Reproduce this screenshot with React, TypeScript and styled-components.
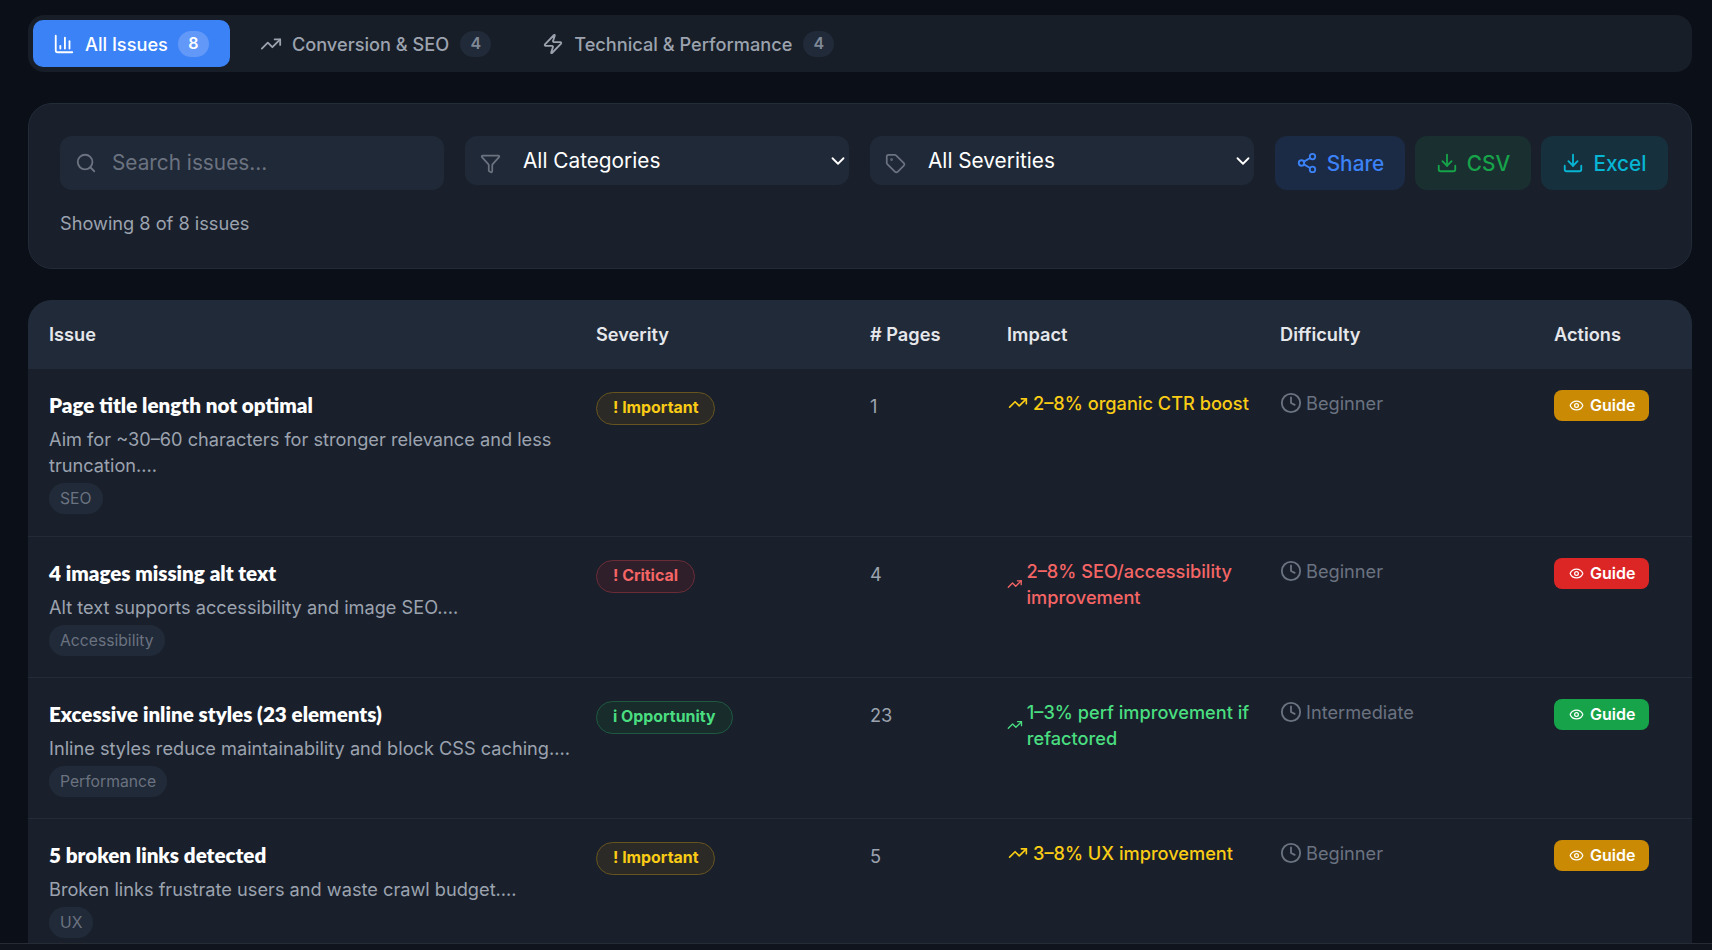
import React from "react";
import styled, { createGlobalStyle, css } from "styled-components";
import { ChartColumn, TrendingUp, Zap, Search, Filter, Tag, Share2, Download, Clock, Eye, ChevronDown } from "lucide-react";

const Global = createGlobalStyle`
  html, body { margin: 0; height: 100%; overflow: hidden; background: #0b0f17; }
  body { font-family: Inter, "Liberation Sans", sans-serif; color: #fff; }
  * { box-sizing: border-box; }
`;

const Page = styled.main`
  height: 950px;
  overflow: hidden;
  padding: 15px 20px 0 28px;
  display: flex;
  flex-direction: column;
  gap: 31px;
`;

const TabBar = styled.nav`
  display: flex;
  gap: 10px;
  height: 57px;
  padding: 5px;
  background: #171e28;
  border-radius: 16px;
`;

const TabButton = styled.div<{ $active?: boolean }>`
  display: flex;
  align-items: center;
  gap: 10px;
  height: 47px;
  padding: 0 21px 0 20px;
  border-radius: 10px;
  font-size: 18.2px;
  font-weight: 500;
  background: ${(p) => (p.$active ? "#3b82f6" : "transparent")};
  color: ${(p) => (p.$active ? "#fff" : "#9ca3af")};
  svg { width: 22px; height: 22px; flex: none; }
`;

const TabCount = styled.span<{ $active?: boolean }>`
  display: inline-flex;
  align-items: center;
  justify-content: center;
  width: 31px;
  height: 26px;
  margin-left: ${(p) => (p.$active ? "0" : "1px")};
  padding-bottom: 2px;
  border-radius: 13px;
  font-size: 16px;
  font-weight: 600;
  background: ${(p) => (p.$active ? "#6298f8" : "#212a38")};
  color: ${(p) => (p.$active ? "#fff" : "#7f8896")};
`;

const FilterCard = styled.section`
  height: 166px;
  padding: 32px 22px 0 31px;
  background: #19202c;
  border: 1px solid #232b39;
  border-radius: 24px;
`;

const Controls = styled.div`
  display: flex;
  align-items: flex-start;
  gap: 21px;
`;

const SearchBox = styled.label`
  display: flex;
  align-items: center;
  gap: 8px;
  width: 384px;
  height: 54px;
  padding: 0 15px;
  background: #202937;
  border-radius: 12px;
  color: #6b7280;
  svg { width: 22px; height: 22px; flex: none; }
`;

const SearchInput = styled.input`
  flex: 1;
  min-width: 0;
  height: 100%;
  border: 0;
  outline: 0;
  padding: 0 0 2px 7px;
  background: transparent;
  font: 400 20.8px Inter, sans-serif;
  color: #fff;
  &::placeholder { color: #6b7280; opacity: 1; }
`;

const SelectWrap = styled.div`
  position: relative;
  width: 384px;
  height: 49px;
`;

const Select = styled.select`
  display: block;
  width: 100%;
  height: 100%;
  padding: 0 0 0 58px;
  border: 0;
  border-radius: 12px;
  outline: 0;
  appearance: none;
  background: #202937;
  color: #fff;
  font: 400 20.8px Inter, sans-serif;
`;

const leadIcon = css`
  position: absolute;
  left: 15px;
  top: 17px;
  width: 21px;
  height: 21px;
  color: #6b7280;
  pointer-events: none;
`;
const FilterGlyph = styled(Filter)`${leadIcon}`;
const TagGlyph = styled(Tag)`${leadIcon}`;

const Caret = styled(ChevronDown)`
  position: absolute;
  right: 0;
  top: 14px;
  width: 22px;
  height: 22px;
  color: #fff;
  pointer-events: none;
`;

const ActionGroup = styled.div`
  display: flex;
  gap: 10px;
`;

const ActionButton = styled.button<{ $fg: string; $bg: string; $w: number }>`
  display: flex;
  align-items: center;
  justify-content: center;
  gap: 9px;
  width: ${(p) => p.$w}px;
  height: 54px;
  border: 0;
  border-radius: 12px;
  background: ${(p) => p.$bg};
  color: ${(p) => p.$fg};
  font: 500 20.8px Inter, sans-serif;
  svg { width: 22px; height: 22px; }
`;

const Showing = styled.p`
  margin: 19px 0 0;
  font-size: 18.2px;
  line-height: 28px;
  color: #9ca3af;
`;

const TableCard = styled.section`
  background: #19202c;
  border-radius: 24px 24px 0 0;
  flex: 1;
  overflow: hidden;
`;

const Row = styled.div<{ $head?: boolean }>`
  display: grid;
  grid-template-columns: 547px 274px 137px 273px 274px 159px;
  background: ${(p) => (p.$head ? "#212a38" : "transparent")};
  border-bottom: ${(p) => (p.$head ? "0" : "1px solid #232b39")};
  &:nth-child(2) { padding-bottom: 1px; }
`;

const HeadCell = styled.div`
  height: 69px;
  padding: 0 21px 2px;
  display: flex;
  align-items: center;
  font-size: 18.2px;
  font-weight: 600;
  color: #e5e7eb;
`;

const Cell = styled.div`
  padding: 21px 4px 21px 21px;
  min-width: 0;
`;

const Title = styled.div`
  font-family: Lato, Inter, sans-serif;
  font-size: 20.6px;
  font-weight: 800;
  line-height: 30px;
  color: #fff;
`;

const Description = styled.p`
  margin: 6px 0 0;
  font-size: 18.2px;
  line-height: 26px;
  color: #9ca3af;
`;

const Topic = styled.span`
  display: inline-flex;
  align-items: center;
  height: 31px;
  margin-top: 5px;
  padding: 0 11px;
  border-radius: 16px;
  background: #212a38;
  font-size: 15.7px;
  color: #6b7280;
  vertical-align: top;
`;

const Pill = styled.span<{ $fg: string; $bg: string; $line: string }>`
  display: inline-flex;
  align-items: center;
  height: 33px;
  margin-top: 2px;
  padding: 0 16px 2px;
  border: 1px solid ${(p) => p.$line};
  border-radius: 17px;
  background: ${(p) => p.$bg};
  color: ${(p) => p.$fg};
  font-size: 15.9px;
  font-weight: 700;
`;

const PageCount = styled.div`
  font-size: 18.2px;
  line-height: 26px;
  margin-top: 3px;
  color: #9ca3af;
`;

const Impact = styled.div<{ $fg: string }>`
  display: flex;
  align-items: center;
  gap: 4px;
  font-size: 18.2px;
  font-weight: 500;
  line-height: 26px;
  color: ${(p) => p.$fg};
  svg { width: 22px; height: 20px; }
`;

const Difficulty = styled.div`
  display: flex;
  align-items: center;
  gap: 4px;
  font-size: 18.2px;
  line-height: 26px;
  color: #6b7280;
  svg { width: 22px; height: 22px; flex: none; }
`;

const GuideButton = styled.button<{ $bg: string }>`
  display: inline-flex;
  align-items: center;
  gap: 6px;
  width: 95px;
  height: 31px;
  padding: 0 15px 1px;
  border: 0;
  border-radius: 8px;
  background: ${(p) => p.$bg};
  color: #fff;
  font: 600 16px Inter, sans-serif;
  svg { width: 15px; height: 15px; flex: none; }
`;

const BottomBar = styled.div`
  position: fixed;
  left: 0;
  right: 0;
  bottom: 0;
  height: 7px;
  background: #10141c;
  border-top: 1px solid #262b34;
`;

const tones = {
  important: { fg: "#facc15", bg: "#2b2a26", line: "#67551f", text: "! Important", impact: "#facc15", guide: "#ca8a04" },
  critical: { fg: "#f56565", bg: "#2f1f2a", line: "#6a2d37", text: "! Critical", impact: "#f56565", guide: "#dc2626" },
  opportunity: { fg: "#4ade80", bg: "#182c2c", line: "#1f5a40", text: "i Opportunity", impact: "#4ade80", guide: "#16a34a" },
};

const issues = [
  { title: "Page title length not optimal", desc: "Aim for ~30–60 characters for stronger relevance and less truncation....", topic: "SEO", tone: tones.important, pages: 1, impact: "2–8% organic CTR boost", level: "Beginner" },
  { title: "4 images missing alt text", desc: "Alt text supports accessibility and image SEO....", topic: "Accessibility", tone: tones.critical, pages: 4, impact: "2–8% SEO/accessibility improvement", level: "Beginner" },
  { title: "Excessive inline styles (23 elements)", desc: "Inline styles reduce maintainability and block CSS caching....", topic: "Performance", tone: tones.opportunity, pages: 23, impact: "1–3% perf improvement if refactored", level: "Intermediate" },
  { title: "5 broken links detected", desc: "Broken links frustrate users and waste crawl budget....", topic: "UX", tone: tones.important, pages: 5, impact: "3–8% UX improvement", level: "Beginner" },
];

export default function App() {
  return (
    <>
      <Global />
      <Page>
        <TabBar>
          <TabButton $active><ChartColumn />All Issues<TabCount $active>8</TabCount></TabButton>
          <TabButton><TrendingUp />Conversion &amp; SEO<TabCount>4</TabCount></TabButton>
          <TabButton><Zap />Technical &amp; Performance<TabCount>4</TabCount></TabButton>
        </TabBar>
        <FilterCard>
          <Controls>
            <SearchBox><Search /><SearchInput placeholder="Search issues..." /></SearchBox>
            <SelectWrap><Select defaultValue="c"><option value="c">All Categories</option></Select><FilterGlyph /><Caret /></SelectWrap>
            <SelectWrap><Select defaultValue="s"><option value="s">All Severities</option></Select><TagGlyph /><Caret /></SelectWrap>
            <ActionGroup>
              <ActionButton $w={130} $fg="#3b82f6" $bg="#1b2a45"><Share2 />Share</ActionButton>
              <ActionButton $w={116} $fg="#16a34a" $bg="#1a2f30"><Download />CSV</ActionButton>
              <ActionButton $w={127} $fg="#06b6d4" $bg="#17303d"><Download />Excel</ActionButton>
            </ActionGroup>
          </Controls>
          <Showing>Showing 8 of 8 issues</Showing>
        </FilterCard>
        <TableCard>
          <Row $head>
            {["Issue", "Severity", "# Pages", "Impact", "Difficulty", "Actions"].map((h) => <HeadCell key={h}>{h}</HeadCell>)}
          </Row>
          {issues.map((it) => (
            <Row key={it.title}>
              <Cell>
                <Title>{it.title}</Title>
                <Description>{it.desc}</Description>
                <Topic>{it.topic}</Topic>
              </Cell>
              <Cell><Pill $fg={it.tone.fg} $bg={it.tone.bg} $line={it.tone.line}>{it.tone.text}</Pill></Cell>
              <Cell><PageCount>{it.pages}</PageCount></Cell>
              <Cell><Impact $fg={it.tone.impact}><TrendingUp />{it.impact}</Impact></Cell>
              <Cell><Difficulty><Clock />{it.level}</Difficulty></Cell>
              <Cell><GuideButton $bg={it.tone.guide}><Eye />Guide</GuideButton></Cell>
            </Row>
          ))}
        </TableCard>
      </Page>
      <BottomBar />
    </>
  );
}
